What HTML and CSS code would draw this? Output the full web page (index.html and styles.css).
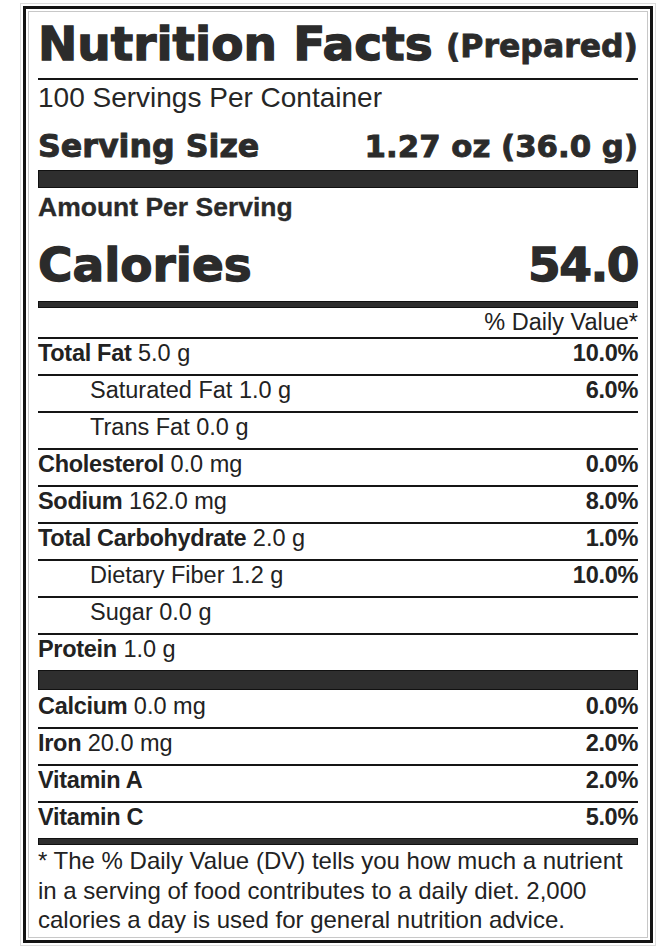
FILE: index.html
```html
<!DOCTYPE html>
<html lang="en">
<head>
<meta charset="utf-8">
<title>Nutrition Facts</title>
<link rel="stylesheet" href="styles.css">
</head>
<body>
<div class="frame">
  <div class="label">
    <div class="inner">
      <header class="head">
        <h1 class="title">Nutrition Facts</h1>
        <span class="prepared">(Prepared)</span>
      </header>
      <p class="servings">100 Servings Per Container</p>
      <div class="serving-size">
        <span class="ss-label">Serving Size</span>
        <span class="ss-value">1.27 oz (36.0 g)</span>
      </div>
      <div class="bar bar-thick"></div>
      <p class="amount">Amount Per Serving</p>
      <div class="calories">
        <span class="cal-label">Calories</span>
        <span class="cal-value">54.0</span>
      </div>
      <div class="bar bar-med"></div>
      <div class="dv">% Daily Value*</div>
      <ul class="rows">
        <li class="row"><span class="name"><b>Total Fat</b> 5.0 g</span><b class="pct">10.0%</b></li>
        <li class="row sub"><span class="name">Saturated Fat 1.0 g</span><b class="pct">6.0%</b></li>
        <li class="row sub"><span class="name">Trans Fat 0.0 g</span></li>
        <li class="row"><span class="name"><b>Cholesterol</b> 0.0 mg</span><b class="pct">0.0%</b></li>
        <li class="row"><span class="name"><b>Sodium</b> 162.0 mg</span><b class="pct">8.0%</b></li>
        <li class="row"><span class="name"><b>Total Carbohydrate</b> 2.0 g</span><b class="pct">1.0%</b></li>
        <li class="row sub"><span class="name">Dietary Fiber 1.2 g</span><b class="pct">10.0%</b></li>
        <li class="row sub"><span class="name">Sugar 0.0 g</span></li>
        <li class="row"><span class="name"><b>Protein</b> 1.0 g</span></li>
      </ul>
      <div class="bar bar-thick2"></div>
      <ul class="rows">
        <li class="row first"><span class="name"><b>Calcium</b> 0.0 mg</span><b class="pct">0.0%</b></li>
        <li class="row"><span class="name"><b>Iron</b> 20.0 mg</span><b class="pct">2.0%</b></li>
        <li class="row"><span class="name"><b>Vitamin A</b></span><b class="pct">2.0%</b></li>
        <li class="row"><span class="name"><b>Vitamin C</b></span><b class="pct">5.0%</b></li>
      </ul>
      <div class="bar bar-med"></div>
      <p class="footnote">* The % Daily Value (DV) tells you how much a nutrient in a serving of food contributes to a daily diet. 2,000 calories a day is used for general nutrition advice.</p>
    </div>
  </div>
</div>
</body>
</html>
```
FILE: styles.css
```css
* { box-sizing: border-box; }

html, body {
  margin: 0;
  padding: 0;
  background: #ffffff;
}

body {
  font-family: "Liberation Sans", Arial, sans-serif;
  color: #222222;
}

.frame {
  margin: 3px 0 0 20px;
  width: 636px;
  border: 1px solid #dcdcdc;
  padding: 2px;
}

.label {
  border: 3px solid #141414;
  padding: 2px;
}

.inner {
  border: 1px solid #c8c8c8;
  padding: 0 9px;
}

.head {
  display: flex;
  justify-content: space-between;
  align-items: flex-start;
  padding: 6px 0 8px;
  border-bottom: 2px solid #151515;
}

.title {
  margin: 0;
  font-family: "DejaVu Sans", sans-serif;
  font-weight: bold;
  font-size: 47px;
  line-height: 52px;
  color: #2b2b2b;
  -webkit-text-stroke: 1.3px #2b2b2b;
}

.prepared {
  margin-top: 10px;
  font-family: "DejaVu Sans", sans-serif;
  font-weight: bold;
  font-size: 31.5px;
  line-height: 36px;
  color: #2b2b2b;
  -webkit-text-stroke: 0.8px #2b2b2b;
}

.servings {
  margin: 2px 0 0;
  font-size: 28px;
  line-height: 32px;
  color: #262626;
}

.serving-size {
  display: flex;
  justify-content: space-between;
  align-items: baseline;
  margin-top: 14px;
  font-family: "DejaVu Sans", sans-serif;
  font-weight: bold;
  color: #2b2b2b;
  -webkit-text-stroke: 0.9px #2b2b2b;
}

.ss-label {
  font-size: 31.7px;
  line-height: 36px;
}

.ss-value {
  font-size: 30.8px;
  line-height: 36px;
}

.bar {
  background: #2e2e2e;
  border: 1px solid #111111;
}

.bar-thick {
  height: 18px;
  margin-top: 6px;
}

.bar-thick2 {
  height: 20px;
}

.bar-med {
  height: 7px;
}

.calories + .bar-med {
  margin-top: 11px;
}

.amount {
  margin: 3px 0 0;
  font-weight: bold;
  font-size: 26.5px;
  line-height: 32px;
  color: #2a2a2a;
  -webkit-text-stroke: 0.3px #2a2a2a;
}

.calories {
  display: flex;
  justify-content: space-between;
  align-items: baseline;
  margin-top: 17px;
  font-family: "DejaVu Sans", sans-serif;
  font-weight: bold;
  font-size: 47px;
  line-height: 50px;
  color: #2b2b2b;
  -webkit-text-stroke: 1.3px #2b2b2b;
}

.cal-value {
  letter-spacing: -1.5px;
}

.dv {
  text-align: right;
  font-size: 23.5px;
  line-height: 28px;
  padding-bottom: 1px;
}

.rows {
  list-style: none;
  margin: 0;
  padding: 0;
}

.row {
  display: flex;
  justify-content: space-between;
  border-top: 2px solid #151515;
  font-size: 23.5px;
  line-height: 28px;
  padding-bottom: 7px;
}

.row.first {
  border-top-color: transparent;
}

.row b {
  letter-spacing: -0.3px;
}

.row.sub .name {
  padding-left: 52px;
}

.pct {
  font-weight: bold;
}

.footnote {
  margin: 0;
  padding: 1px 0 2px;
  font-size: 24px;
  line-height: 29.5px;
  color: #222222;
}
```
